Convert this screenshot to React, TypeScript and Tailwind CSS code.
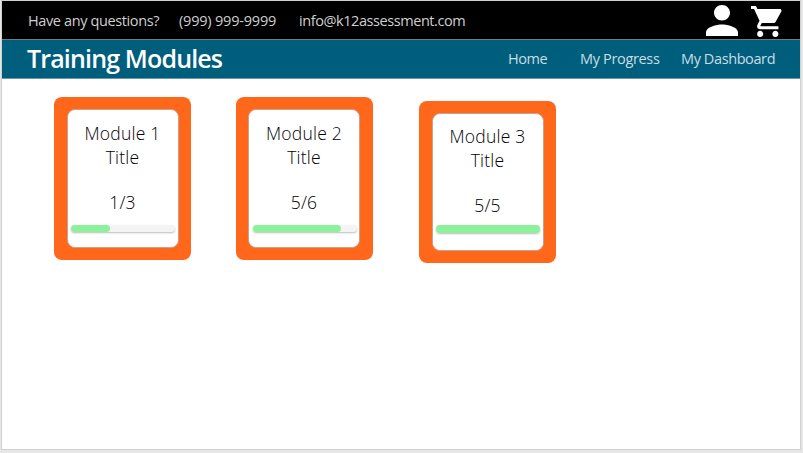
type Module = {
  name: string;
  score: string;
  width: string;
  card: string;
  content: string;
  bar: string;
};

const modules: Module[] = [
  { name: "Module 1", score: "1/3", width: "w-[39px]", card: "mt-[18px]", content: "pt-[11px]", bar: "mt-[11px] h-[7px]" },
  { name: "Module 2", score: "5/6", width: "w-[88px]", card: "mt-[18px] ml-[44.5px]", content: "pt-[11px]", bar: "mt-[11px] h-[7px]" },
  { name: "Module 3", score: "5/5", width: "w-[104px]", card: "mt-[21.5px] ml-[46.5px]", content: "pt-[10px]", bar: "mt-[8px] h-[8px]" },
];

function PersonIcon() {
  return (
    <svg viewBox="4 4 16 16" preserveAspectRatio="none" className="mt-1 h-[31px] w-8 fill-white">
      <path d="M12 12c2.21 0 4-1.79 4-4s-1.79-4-4-4-4 1.79-4 4 1.79 4 4 4zm0 2c-2.67 0-8 1.34-8 4v2h16v-2c0-2.66-5.33-4-8-4z" />
    </svg>
  );
}

function CartIcon() {
  return (
    <svg viewBox="1 2 21 20" preserveAspectRatio="none" className="mt-[5px] ml-[13px] h-[31px] w-8 fill-white">
      <path d="M7 18c-1.1 0-1.99.9-1.99 2S5.900 22 7 22s2-.9 2-2-.9-2-2-2zM1 2v2h2l3.6 7.590-1.350 2.450c-.16.28-.25.61-.25.960 0 1.100.9 2 2 2h12v-2H7.420c-.14 0-.25-.11-.25-.25l.03-.12.9-1.630h7.450c.75 0 1.410-.41 1.750-1.030l3.580-6.490c.08-.14.12-.31.12-.48 0-.55-.45-1-1-1H5.210l-.94-2H1zm16 16c-1.100 0-1.990.9-1.990 2s.89 2 1.990 2 2-.9 2-2-.9-2-2-2z" />
    </svg>
  );
}

function ModuleCard({ item }: { item: Module }) {
  return (
    <article className={`h-[162.5px] w-[137px] shrink-0 rounded-lg bg-[#ff671b] px-[12.5px] pt-[12px] ${item.card}`}>
      <div className={`flex h-[138.5px] w-[112px] flex-col items-center rounded-lg border border-[#c9a28e] bg-white text-[17.5px] leading-6 font-light text-black ${item.content}`}>
        <h2 className="tracking-[0.25px]">{item.name}</h2>
        <p className="tracking-[0.2px]">Title</p>
        <p className="mt-[21px] tracking-[0.2px]">{item.score}</p>
        <div className={`ml-px w-[104px] shrink-0 rounded-full bg-[#f4f4f4] shadow-[0_1px_2px_#bbbbbb] ${item.bar}`}>
          <div className={`h-full rounded-full bg-[#8bf29b] ${item.width}`} />
        </div>
      </div>
    </article>
  );
}

export default function App() {
  return (
    <div className="h-[453px] w-[803px] overflow-hidden bg-[#e6e6e6] pt-px pl-[2px] font-['Open_Sans','Noto_Sans',sans-serif]">
      <div className="h-[448px] w-[798px] bg-white shadow-[0_0_0_1px_#cfd1d0]">
        <header className="flex h-[39px] border-b border-[#77797a] bg-black text-[14.5px] leading-[39px] whitespace-nowrap text-[#cfcfcf]">
          <span className="ml-[26px] w-[151px] tracking-[-0.38px]">Have any questions?</span>
          <span className="w-[120px] tracking-[-0.2px]">(999) 999-9999</span>
          <span className="w-[407px] tracking-[-0.43px]">info@k12assessment.com</span>
          <PersonIcon />
          <CartIcon />
        </header>
        <nav className="flex h-[39px] border-b border-[#6e98a8] bg-[#005e7d] text-[14.5px] leading-[38px] whitespace-nowrap text-[#c9dde4]">
          <h1 className="ml-[25px] w-[481px] text-[25px] leading-[36px] font-semibold tracking-[-0.85px] text-white">Training Modules</h1>
          <a className="w-[72px] tracking-[-0.45px]">Home</a>
          <a className="w-[101px] tracking-[-0.34px]">My Progress</a>
          <a className="tracking-[-0.4px]">My Dashboard</a>
        </nav>
        <main className="flex items-start pl-[52px]">
          {modules.map((item) => (
            <ModuleCard key={item.name} item={item} />
          ))}
        </main>
      </div>
    </div>
  );
}
